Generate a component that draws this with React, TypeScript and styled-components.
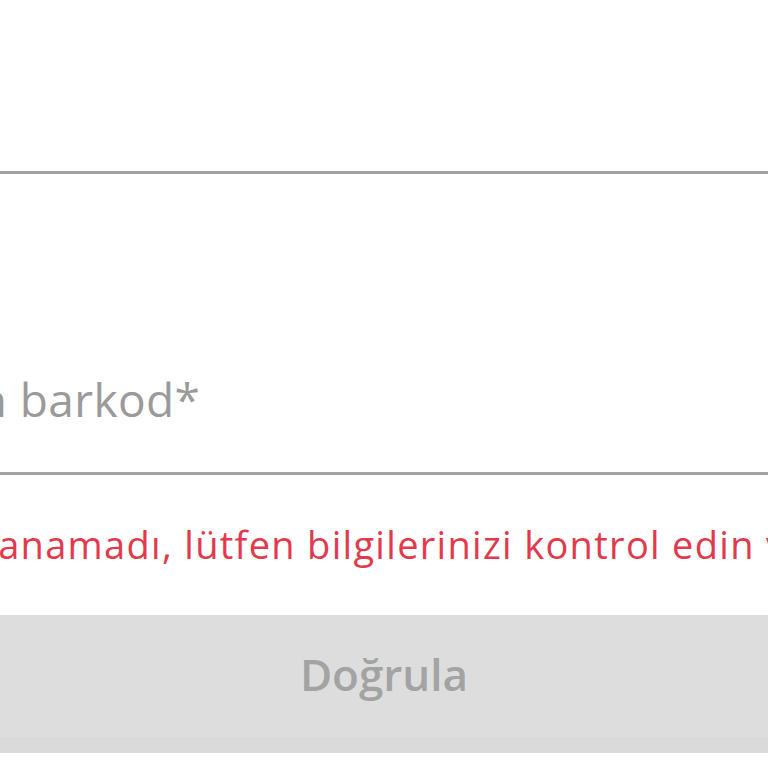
import React from "react";
import styled, { createGlobalStyle } from "styled-components";

const GlobalStyle = createGlobalStyle`
  html, body {
    margin: 0;
    padding: 0;
    background: #fff;
  }
  body {
    font-family: "Open Sans", "Noto Sans", sans-serif;
  }
`;

const Page = styled.div`
  width: 768px;
  height: 768px;
  overflow: hidden;
  display: flex;
  flex-direction: column;
`;

const Field = styled.div<{ $height: number }>`
  height: ${(p) => p.$height}px;
  border-bottom: 3px solid #a2a2a2;
  display: flex;
  align-items: flex-end;
  overflow: hidden;
  flex-shrink: 0;
`;

const Placeholder = styled.span<{ $shift: number }>`
  display: block;
  white-space: nowrap;
  margin-left: ${(p) => -p.$shift}px;
  padding-bottom: 50px;
  font-size: 46px;
  letter-spacing: 0.4px;
  line-height: 1;
  color: #9a9a9a;
`;

const ErrorText = styled.p<{ $shift: number }>`
  margin: 47px 0 0 ${(p) => -p.$shift}px;
  white-space: nowrap;
  font-size: 38px;
  letter-spacing: 1.3px;
  line-height: 1.2;
  color: #e23a4c;
`;

const SubmitButton = styled.button`
  margin-top: 47px;
  height: 138px;
  width: 100%;
  flex-shrink: 0;
  border: none;
  border-bottom: 16px solid #dadada;
  background: #dddddd;
  color: #a3a3a3;
  font-family: "Open Sans", "Noto Sans", sans-serif;
  font-weight: 600;
  font-size: 44px;
  padding: 0 0 4px;
  cursor: default;
`;

export default function App() {
  return (
    <Page>
      <GlobalStyle />
      <Field $height={171} />
      <Field $height={298}>
        <Placeholder $shift={103}>Ürün barkod*</Placeholder>
      </Field>
      <ErrorText $shift={231}>
        Ürün doğrulanamadı, lütfen bilgilerinizi kontrol edin ve tekrar deneyin.
      </ErrorText>
      <SubmitButton disabled>Doğrula</SubmitButton>
    </Page>
  );
}
